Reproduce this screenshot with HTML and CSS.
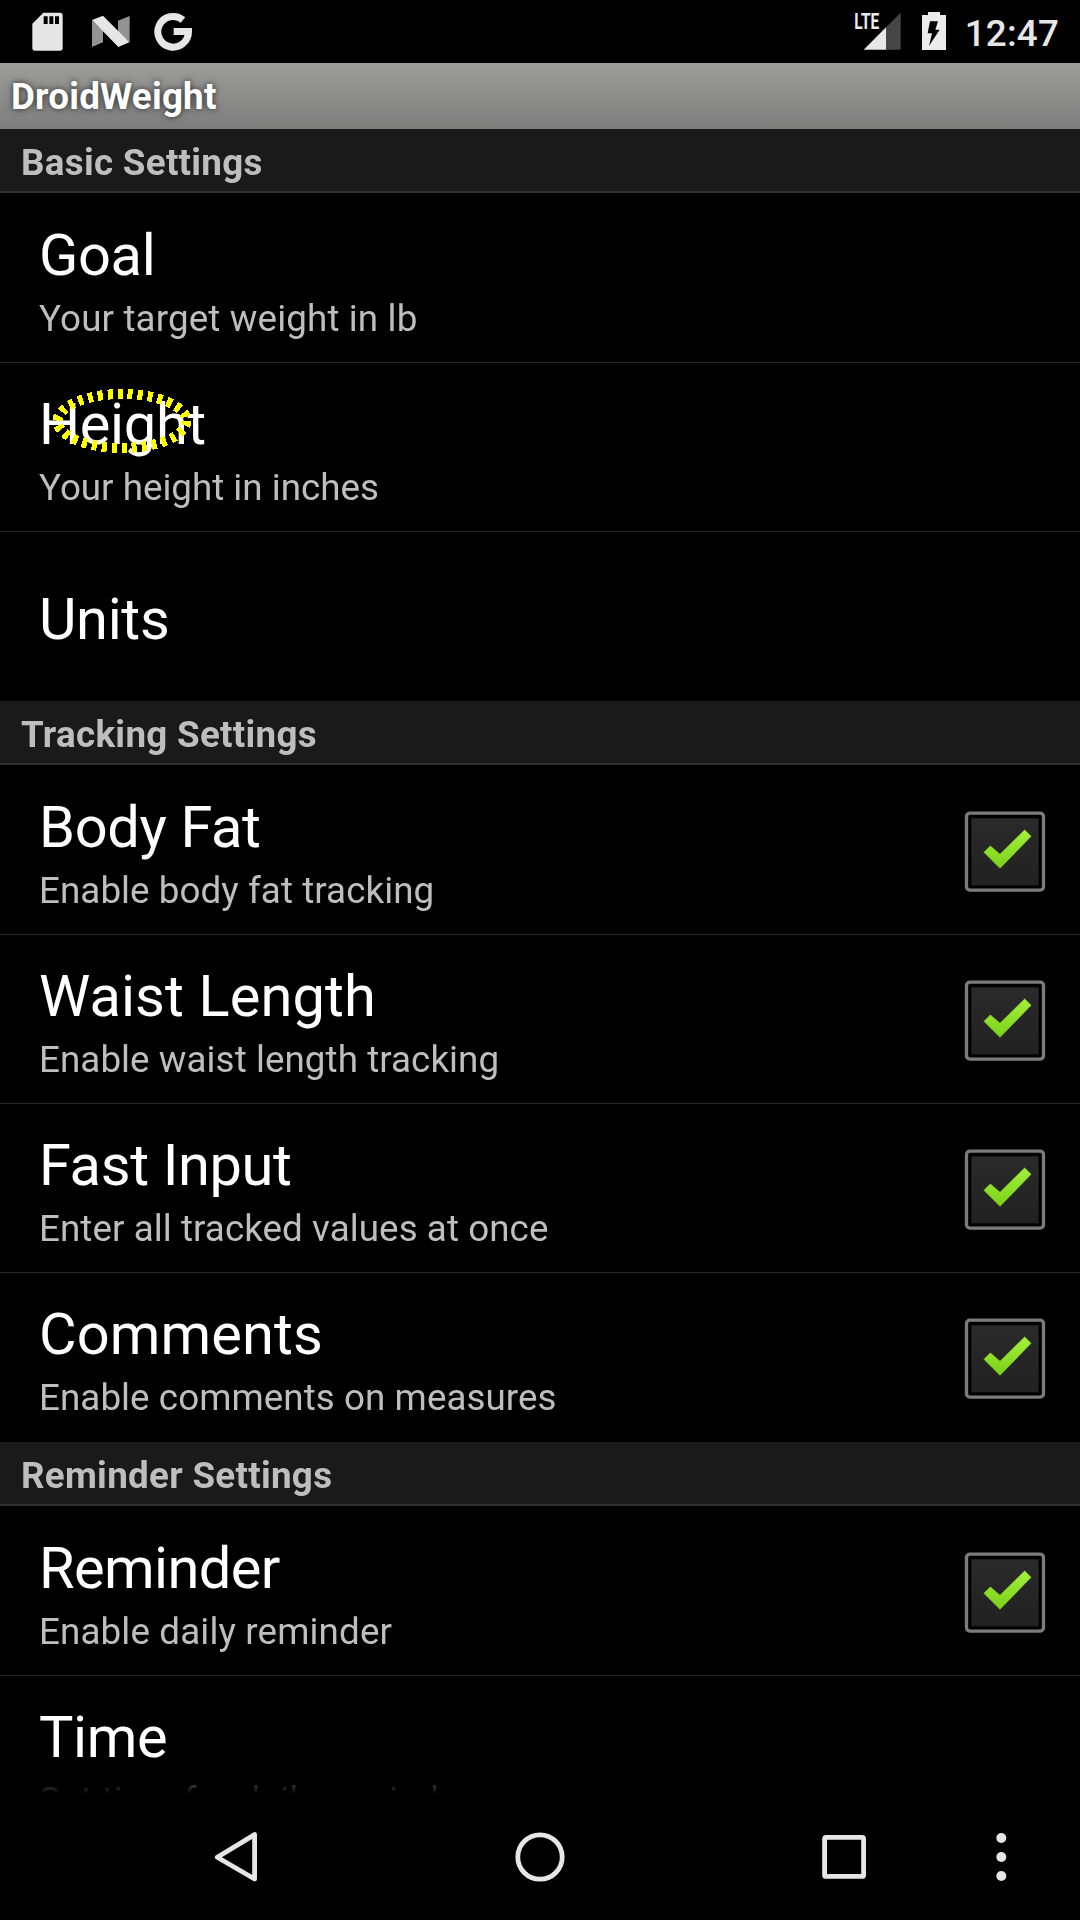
FILE: index.html
```html
<!DOCTYPE html>
<html lang="en">
<head>
<meta charset="utf-8">
<title>DroidWeight</title>
<link rel="stylesheet" href="styles.css">
</head>
<body>
<svg class="defs" width="0" height="0" aria-hidden="true">
  <defs>
    <linearGradient id="box" x1="0" y1="0" x2="0" y2="1"><stop offset="0" stop-color="#2a2a2a"/><stop offset="1" stop-color="#212121"/></linearGradient>
    <linearGradient id="tick" x1="0" y1="0" x2="0" y2="1"><stop offset="0" stop-color="#a4f03c"/><stop offset="1" stop-color="#7ad018"/></linearGradient>
    <symbol id="checkbox" viewBox="72 63 246 246">
      <rect x="79.500" y="69.500" width="231" height="231" rx="10" fill="#000" stroke="#7c7c7c" stroke-width="10"/>
      <rect x="94" y="85" width="202" height="201" fill="url(#box)"/>
      <path d="M132 187L151 168L180 193L254 120L273 139L180 235Z" fill="url(#tick)" stroke="url(#tick)" stroke-width="2"/>
    </symbol>
  </defs>
</svg>

<header class="status">
  <div class="notifications">
    <svg class="icon-sd" viewBox="90 0 105 189"><path fill="#e6e6e6" fill-rule="evenodd" d="M130 38H180Q188 38 188 46V144Q188 152 180 152H105Q97 152 97 144V71ZM131 49V72H143V49ZM148 49V72H160V49ZM165 49V72H177V49Z"/></svg>
    <svg class="icon-n" viewBox="270 0 126 189"><path fill="#939393" d="M276 61L309 92V127L276 141ZM354 62L389 48V127L354 100Z"/><path fill="#e6e6e6" d="M276 60L309 47L388 127L355 141Z"/></svg>
    <svg class="icon-g" viewBox="459 0 120 189"><path fill="none" stroke="#e6e6e6" stroke-width="21" d="M549 60A46 46 0 1 0 565.500 94.500H521"/><path fill="#e6e6e6" d="M560 84H575Q576 90 576 96H560Z"/></svg>
  </div>
  <div class="system">
    <svg class="icon-signal" viewBox="102 0 144 189"><path fill="#464646" d="M242 38V149H198V82Z"/><path fill="#e6e6e6" d="M131 149L198 82V149Z"/><text class="lte" x="103" y="87" textLength="75" lengthAdjust="spacingAndGlyphs">LTE</text></svg>
    <svg class="icon-battery" viewBox="303 0 78 189"><path fill="#ebebeb" fill-rule="evenodd" d="M324 36H360V45H378V150H306V45H324ZM330 64L323 100H336L327 138L359 89H346L354 64Z"/></svg>
    <span class="clock">12:47</span>
  </div>
</header>
<div class="titlebar">DroidWeight</div>

<main class="list">
  <h2 class="category">Basic Settings</h2>
  <section class="row"><div class="label"><div class="title tight">Goal</div><div class="summary wide">Your target weight in lb</div></div></section>
  <section class="row">
    <div class="label"><div class="title tight">Height</div><div class="summary even">Your height in inches</div></div>
    <svg class="highlight" viewBox="0 0 150 74"><ellipse cx="75" cy="37" rx="64.500" ry="27" fill="none" stroke="#ff0" stroke-width="10" stroke-dasharray="5 5"/></svg>
  </section>
  <section class="row last"><div class="label"><div class="title tight">Units</div></div></section>

  <h2 class="category">Tracking Settings</h2>
  <section class="row"><div class="label"><div class="title tight">Body Fat</div><div class="summary">Enable body fat tracking</div></div><svg class="check"><use href="#checkbox"/></svg></section>
  <section class="row"><div class="label"><div class="title loose">Waist Length</div><div class="summary">Enable waist length tracking</div></div><svg class="check"><use href="#checkbox"/></svg></section>
  <section class="row"><div class="label"><div class="title tight">Fast Input</div><div class="summary">Enter all tracked values at once</div></div><svg class="check"><use href="#checkbox"/></svg></section>
  <section class="row last"><div class="label"><div class="title loose">Comments</div><div class="summary">Enable comments on measures</div></div><svg class="check"><use href="#checkbox"/></svg></section>

  <h2 class="category">Reminder Settings</h2>
  <section class="row"><div class="label"><div class="title tighter">Reminder</div><div class="summary wide">Enable daily reminder</div></div><svg class="check"><use href="#checkbox"/></svg></section>
  <section class="row"><div class="label"><div class="title tight">Time</div><div class="summary">Set time for daily reminder</div></div></section>
</main>

<nav class="navbar">
  <svg viewBox="0 0 56 56"><path d="M9.300 28.200L46.600 5.600V50Z" stroke-linejoin="round"/></svg>
  <svg viewBox="0 0 56 56"><circle cx="28" cy="28" r="22.200"/></svg>
  <svg viewBox="0 0 56 56"><rect x="8.600" y="8.400" width="39" height="39" rx="1.500"/></svg>
  <svg class="more" viewBox="0 0 56 56"><g class="dots"><circle cx="28.300" cy="9" r="5"/><circle cx="28.300" cy="28" r="5"/><circle cx="28.300" cy="47" r="5"/></g></svg>
</nav>
</body>
</html>
```
FILE: styles.css
```css
* { box-sizing: border-box; }

body {
  margin: 0;
  width: 1080px;
  height: 1920px;
  display: flex;
  flex-direction: column;
  overflow: hidden;
  background: #000;
  color: #fff;
  font-family: Roboto, sans-serif;
}

svg { display: block; flex: none; }
.defs { position: absolute; }

.status {
  flex: none;
  height: 63px;
  display: flex;
  justify-content: space-between;
  padding: 0 21px 0 30px;
}
.notifications, .system { display: flex; }
.status svg { height: 63px; }
.icon-sd { width: 35px; }
.icon-n { width: 42px; margin-left: 25px; }
.icon-g { width: 40px; margin-left: 21px; }
.icon-signal { width: 48px; }
.icon-battery { width: 26px; margin-left: 19px; }
.lte { font-size: 64px; font-weight: 700; fill: #ebebeb; }
.clock {
  margin-left: 18px;
  font-size: 36.75px;
  line-height: 67px;
  font-weight: 500;
  letter-spacing: .2px;
  color: #e6e6e6;
}

.titlebar {
  flex: none;
  height: 66px;
  padding-left: 11px;
  background: linear-gradient(#9c9c9a, #7d7d7d);
  font-size: 36.75px;
  font-weight: 700;
  line-height: 68px;
  letter-spacing: .22px;
  text-shadow: 0 0 6px rgba(0, 0, 0, .75);
}

.list {
  flex: none;
  height: 1665px;
  overflow: hidden;
  -webkit-mask-image: linear-gradient(#000 1633px, transparent 1665px);
  mask-image: linear-gradient(#000 1633px, transparent 1665px);
}

.category {
  height: 64px;
  margin: 0 0 1px;
  padding-left: 21px;
  background: #1a1a1a;
  border-bottom: 2px solid #303030;
  color: #bebebe;
  font-size: 36.75px;
  font-weight: 700;
  line-height: 68px;
  letter-spacing: .3px;
}

.row {
  position: relative;
  height: 169px;
  display: flex;
  align-items: center;
  justify-content: space-between;
  padding: 0 34px 0 39px;
  border-bottom: 1px solid #272727;
}
.row.last { border-bottom-color: #000; }
.label { padding-top: 5px; }
.title { font-size: 57.75px; line-height: 68px; }
.title.tight { letter-spacing: -.35px; }
.title.tighter { letter-spacing: -.6px; }
.title.loose { letter-spacing: .12px; }
.summary {
  margin-top: 8px;
  font-size: 36.75px;
  line-height: 43px;
  letter-spacing: .07px;
  color: #bebebe;
}
.summary.wide { letter-spacing: .14px; }
.summary.even { letter-spacing: 0; }
.check { width: 82px; height: 82px; margin-top: 4px; }

.highlight {
  position: absolute;
  left: 47px;
  top: 21px;
  width: 150px;
  height: 74px;
  shape-rendering: crispEdges;
}

.navbar {
  flex: none;
  height: 126px;
  display: flex;
  align-items: center;
  gap: 248px;
  padding-left: 208px;
}
.navbar svg {
  width: 56px;
  height: 56px;
  fill: none;
  stroke: #e6e6e6;
  stroke-width: 4.8px;
}
.navbar .more { margin-left: -147px; }
.dots { fill: #e6e6e6; stroke: none; }
```
